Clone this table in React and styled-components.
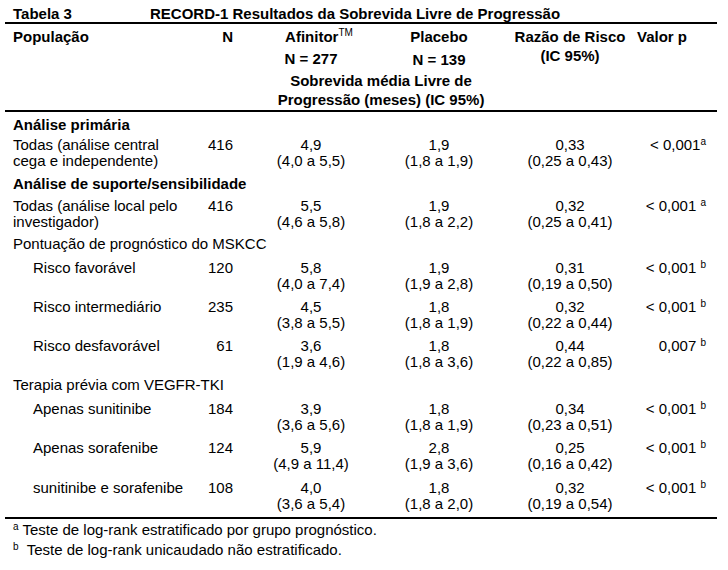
import React from "react";
import styled, { createGlobalStyle } from "styled-components";

const GlobalStyle = createGlobalStyle`
  html, body {
    margin: 0;
    padding: 0;
    background: #fff;
  }
  body {
    font-family: "Liberation Sans", Arial, sans-serif;
    font-size: 15px;
    line-height: 16px;
    color: #000;
  }
`;

const COLS = "185px 43px 136px 140px 122px 86px";

const Page = styled.div`
  width: 728px;
  height: 570px;
  padding: 0 11px 0 5px;
  box-sizing: border-box;
`;

const Caption = styled.div`
  display: flex;
  height: 16px;
  padding: 6px 0 0 8px;
  border-bottom: 2px solid #000;
  font-weight: bold;
`;

const CaptionNum = styled.span`
  width: 137px;
`;

const Grid = styled.div`
  display: grid;
  grid-template-columns: ${COLS};
`;

const Header = styled(Grid)`
  padding: 5px 0 1px;
  border-bottom: 2px solid #000;
  font-weight: bold;
`;

const Body = styled.div`
  padding-bottom: 5px;
  border-bottom: 2px solid #000;
`;

const Row = styled(Grid)`
  padding-top: ${(p) => p.$gap}px;
`;

const Section = styled.div`
  padding: ${(p) => p.$gap}px 0 0 8px;
  font-weight: ${(p) => (p.$bold ? "bold" : "normal")};
`;

const Label = styled.div`
  padding-left: ${(p) => (p.$indent ? 28 : 8)}px;
  white-space: ${(p) => (p.$indent ? "nowrap" : "normal")};
`;

const NCell = styled.div`
  text-align: right;
`;

const Drug = styled.div`
  padding-left: 20px;
  text-align: center;
  white-space: nowrap;
`;

const Mid = styled.div`
  text-align: center;
  white-space: nowrap;
`;

const PCell = styled.div`
  padding-right: 11px;
  text-align: right;
  white-space: nowrap;
`;

const HeadLeft = styled.div`
  padding-left: ${(p) => p.$pad || 0}px;
`;

const Line = styled.div`
  margin-top: ${(p) => p.$gap || 0}px;
  padding-left: ${(p) => p.$shift || 0}px;
`;

const Subtitle = styled.div`
  grid-column: 3 / 5;
  margin-top: 3px;
  padding-left: 20px;
  text-align: center;
  line-height: 19px;
`;

const Sup = styled.sup`
  font-size: 10px;
  line-height: 0;
  vertical-align: ${(p) => p.$up || 5}px;
  font-weight: normal;
`;

const Notes = styled.div`
  padding: 3px 0 0 8px;
`;

const Note = styled.div`
  margin-top: ${(p) => p.$gap || 0}px;
  white-space: pre;
`;

const sections = [
  {
    title: "Análise primária",
    bold: true,
    gap: 5,
    rows: [
      {
        label: "Todas (análise central cega e independente)",
        n: "416",
        afi: ["4,9", "(4,0 a 5,5)"],
        pla: ["1,9", "(1,8 a 1,9)"],
        hr: ["0,33", "(0,25 a 0,43)"],
        p: "< 0,001",
        note: "a",
        gap: 4,
      },
    ],
  },
  {
    title: "Análise de suporte/sensibilidade",
    bold: true,
    gap: 7,
    rows: [
      {
        label: "Todas (análise local pelo investigador)",
        n: "416",
        afi: ["5,5", "(4,6 a 5,8)"],
        pla: ["1,9", "(1,8 a 2,2)"],
        hr: ["0,32", "(0,25 a 0,41)"],
        p: "< 0,001 ",
        note: "a",
        gap: 6,
      },
    ],
  },
  {
    title: "Pontuação de prognóstico do MSKCC",
    gap: 6,
    rows: [
      {
        label: "Risco favorável",
        indent: true,
        n: "120",
        afi: ["5,8", "(4,0 a 7,4)"],
        pla: ["1,9", "(1,9 a 2,8)"],
        hr: ["0,31", "(0,19 a 0,50)"],
        p: "< 0,001 ",
        note: "b",
        gap: 8,
      },
      {
        label: "Risco intermediário",
        indent: true,
        n: "235",
        afi: ["4,5", "(3,8 a 5,5)"],
        pla: ["1,8", "(1,8 a 1,9)"],
        hr: ["0,32", "(0,22 a 0,44)"],
        p: "< 0,001 ",
        note: "b",
        gap: 7,
      },
      {
        label: "Risco desfavorável",
        indent: true,
        n: "61",
        afi: ["3,6", "(1,9 a 4,6)"],
        pla: ["1,8", "(1,8 a 3,6)"],
        hr: ["0,44", "(0,22 a 0,85)"],
        p: "0,007 ",
        note: "b",
        gap: 7,
      },
    ],
  },
  {
    title: "Terapia prévia com VEGFR-TKI",
    gap: 7,
    rows: [
      {
        label: "Apenas sunitinibe",
        indent: true,
        n: "184",
        afi: ["3,9", "(3,6 a 5,6)"],
        pla: ["1,8", "(1,8 a 1,9)"],
        hr: ["0,34", "(0,23 a 0,51)"],
        p: "< 0,001 ",
        note: "b",
        gap: 8,
      },
      {
        label: "Apenas sorafenibe",
        indent: true,
        n: "124",
        afi: ["5,9", "(4,9 a 11,4)"],
        pla: ["2,8", "(1,9 a 3,6)"],
        hr: ["0,25", "(0,16 a 0,42)"],
        p: "< 0,001 ",
        note: "b",
        gap: 7,
      },
      {
        label: "sunitinibe e sorafenibe",
        indent: true,
        n: "108",
        afi: ["4,0", "(3,6 a 5,4)"],
        pla: ["1,8", "(1,8 a 2,0)"],
        hr: ["0,32", "(0,19 a 0,54)"],
        p: "< 0,001 ",
        note: "b",
        gap: 8,
      },
    ],
  },
];

const Pair = ({ as: Cell, values }) => (
  <Cell>
    {values[0]}
    <br />
    {values[1]}
  </Cell>
);

export default function App() {
  return (
    <>
      <GlobalStyle />
      <Page>
        <Caption>
          <CaptionNum>Tabela 3</CaptionNum>
          <span>RECORD-1 Resultados da Sobrevida Livre de Progressão</span>
        </Caption>

        <Header>
          <HeadLeft $pad={8}>População</HeadLeft>
          <NCell>N</NCell>
          <Drug>
            <Line $shift={16}>
              Afinitor<Sup $up={6}>TM</Sup>
            </Line>
            <Line $gap={6}>N = 277</Line>
          </Drug>
          <Mid>
            <Line>Placebo</Line>
            <Line $gap={7}>N = 139</Line>
          </Mid>
          <Mid>
            <Line>Razão de Risco</Line>
            <Line $gap={3}>(IC 95%)</Line>
          </Mid>
          <HeadLeft $pad={6}>Valor p</HeadLeft>
          <Subtitle>
            Sobrevida média Livre de
            <br />
            Progressão (meses) (IC 95%)
          </Subtitle>
        </Header>

        <Body>
          {sections.map((s) => (
            <React.Fragment key={s.title}>
              <Section $gap={s.gap} $bold={s.bold}>
                {s.title}
              </Section>
              {s.rows.map((r) => (
                <Row key={r.label} $gap={r.gap}>
                  <Label $indent={r.indent}>{r.label}</Label>
                  <NCell>{r.n}</NCell>
                  <Pair as={Drug} values={r.afi} />
                  <Pair as={Mid} values={r.pla} />
                  <Pair as={Mid} values={r.hr} />
                  <PCell>
                    {r.p}
                    <Sup>{r.note}</Sup>
                  </PCell>
                </Row>
              ))}
            </React.Fragment>
          ))}
        </Body>

        <Notes>
          <Note>
            <Sup>a</Sup> Teste de log-rank estratificado por grupo prognóstico.
          </Note>
          <Note $gap={4}>
            <Sup>b</Sup>  Teste de log-rank unicaudado não estratificado.
          </Note>
        </Notes>
      </Page>
    </>
  );
}
